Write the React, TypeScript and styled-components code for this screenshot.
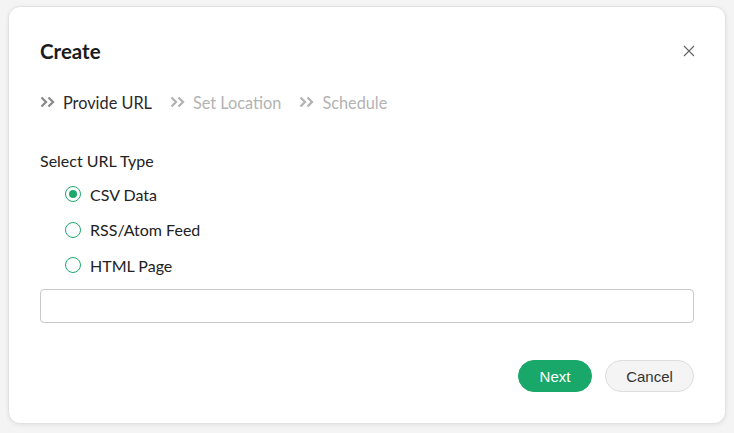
import React, { useState } from "react";
import styled, { createGlobalStyle } from "styled-components";

const GlobalStyle = createGlobalStyle`
  html, body {
    margin: 0;
    padding: 0;
    background: #f4f4f4;
  }
  body {
    font-family: Lato, "Open Sans", sans-serif;
  }
`;

const Page = styled.div`
  width: 734px;
  height: 433px;
  padding: 6px 8px 9px 8px;
  box-sizing: border-box;
`;

const Card = styled.div`
  height: 100%;
  box-sizing: border-box;
  background: #fff;
  border: 1px solid #e2e2e2;
  border-radius: 12px;
  box-shadow: 0 1px 4px rgba(0, 0, 0, 0.08);
  padding: 30px 31px 0 31px;
  display: flex;
  flex-direction: column;
`;

const Header = styled.div`
  display: flex;
  justify-content: space-between;
  align-items: center;
  height: 28px;
`;

const Title = styled.h1`
  margin: 0;
  font-size: 20.5px;
  font-weight: 700;
  color: #1b1b1b;
`;

const CloseButton = styled.button`
  border: none;
  background: none;
  padding: 0;
  width: 14px;
  height: 14px;
  margin-right: -2px;
  display: flex;
  align-items: center;
  justify-content: center;
  cursor: pointer;
`;

const Steps = styled.div`
  display: flex;
  align-items: center;
  gap: 18px;
  margin-top: 27px;
  height: 20px;
`;

const Step = styled.div<{ $active?: boolean }>`
  display: flex;
  align-items: center;
  gap: 8px;
  font-size: 16.3px;
  color: ${(p) => (p.$active ? "#2a2a2a" : "#b3b3b3")};
  svg {
    color: ${(p) => (p.$active ? "#8a8a8a" : "#b3b3b3")};
  }
`;

const Label = styled.div`
  margin-top: 39px;
  font-size: 16px;
  color: #222;
  height: 20px;
  line-height: 20px;
`;

const RadioList = styled.div`
  display: flex;
  flex-direction: column;
  gap: 15.5px;
  margin-top: 13px;
  padding-left: 25px;
`;

const RadioRow = styled.label`
  display: flex;
  align-items: center;
  gap: 9px;
  font-size: 16px;
  color: #222;
  height: 20px;
  cursor: pointer;
`;

const RadioCircle = styled.span<{ $checked?: boolean }>`
  width: 16px;
  height: 16px;
  box-sizing: border-box;
  border-radius: 50%;
  border: 1.5px solid #1ea96b;
  display: flex;
  align-items: center;
  justify-content: center;
  &::after {
    content: "";
    width: 8px;
    height: 8px;
    border-radius: 50%;
    background: #1ea96b;
    display: ${(p) => (p.$checked ? "block" : "none")};
  }
`;

const UrlInput = styled.input`
  margin-top: 14px;
  height: 34px;
  box-sizing: border-box;
  border: 1px solid #c9c9c9;
  border-radius: 4px;
  padding: 0 10px;
  font-size: 14px;
  outline: none;
`;

const Footer = styled.div`
  display: flex;
  justify-content: flex-end;
  gap: 13px;
  margin-top: 37px;
`;

const Button = styled.button<{ $primary?: boolean }>`
  height: 32px;
  border-radius: 16px;
  font-family: "Liberation Sans", Arial, sans-serif;
  font-size: 15px;
  cursor: pointer;
  padding: 0;
  width: ${(p) => (p.$primary ? "74px" : "89px")};
  background: ${(p) => (p.$primary ? "#1aa86a" : "#f4f4f4")};
  color: ${(p) => (p.$primary ? "#fff" : "#333")};
  border: 1px solid ${(p) => (p.$primary ? "#1aa86a" : "#dedede")};
`;

const Chevrons = () => (
  <svg width="15" height="12" viewBox="0 0 15 12" fill="none">
    <path d="M1.5 1.5L6 6L1.5 10.5M8.5 1.5L13 6L8.5 10.5" stroke="currentColor" strokeWidth="2.3" />
  </svg>
);

const options = ["CSV Data", "RSS/Atom Feed", "HTML Page"];

export default function App() {
  const [selected, setSelected] = useState(0);
  return (
    <>
      <GlobalStyle />
      <Page>
        <Card>
          <Header>
            <Title>Create</Title>
            <CloseButton aria-label="Close">
              <svg width="12" height="12" viewBox="0 0 12 12">
                <path d="M1 1L11 11M11 1L1 11" stroke="#666" strokeWidth="1.2" />
              </svg>
            </CloseButton>
          </Header>
          <Steps>
            <Step $active>
              <Chevrons />
              Provide URL
            </Step>
            <Step>
              <Chevrons />
              Set Location
            </Step>
            <Step>
              <Chevrons />
              Schedule
            </Step>
          </Steps>
          <Label>Select URL Type</Label>
          <RadioList>
            {options.map((o, i) => (
              <RadioRow key={o} onClick={() => setSelected(i)}>
                <RadioCircle $checked={selected === i} />
                {o}
              </RadioRow>
            ))}
          </RadioList>
          <UrlInput />
          <Footer>
            <Button $primary>Next</Button>
            <Button>Cancel</Button>
          </Footer>
        </Card>
      </Page>
    </>
  );
}
